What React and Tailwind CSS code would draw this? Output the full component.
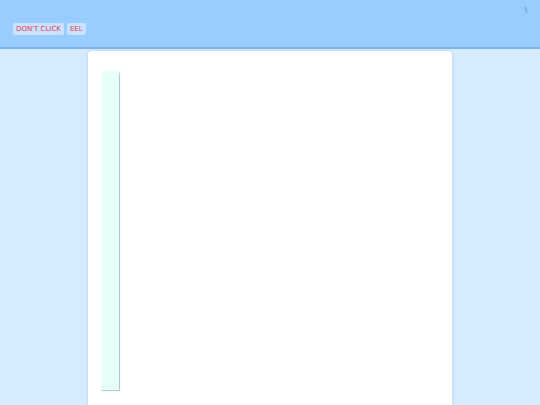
export default function App() {
  return (
    <div className="min-h-[405px] bg-[#d6ebff] font-['DejaVu_Sans',sans-serif]">
      <header className="relative h-[49px] bg-[#99ccff] border-b-2 border-[#7eb6ec] flex items-start px-[13px] pt-[23px]">
        <div className="flex gap-[3px]">
          <button className="h-[12px] px-[3px] rounded-[2px] bg-[#c8e2ff] text-[#e0405a] text-[7px] leading-[12px]">
            DON'T CLICK
          </button>
          <button className="h-[12px] px-[3px] rounded-[2px] bg-[#c8e2ff] text-[#e0405a] text-[7px] leading-[12px]">
            EEL
          </button>
        </div>
        <span className="absolute right-[13px] top-[7px] text-[7px] text-[#3b6ea8] leading-none">\</span>
      </header>
      <main className="flex justify-center pt-[2px]">
        <div className="w-[364px] h-[354px] bg-white rounded-t-[4px] shadow-[0_0_3px_rgba(100,150,200,0.35)] pl-[13px] pt-[20px]">
          <div className="w-[18px] h-[319px] bg-[#e6fff7] rounded-tr-[2px] shadow-[1px_1px_1px_rgba(120,150,190,0.6)]" />
        </div>
      </main>
    </div>
  );
}
